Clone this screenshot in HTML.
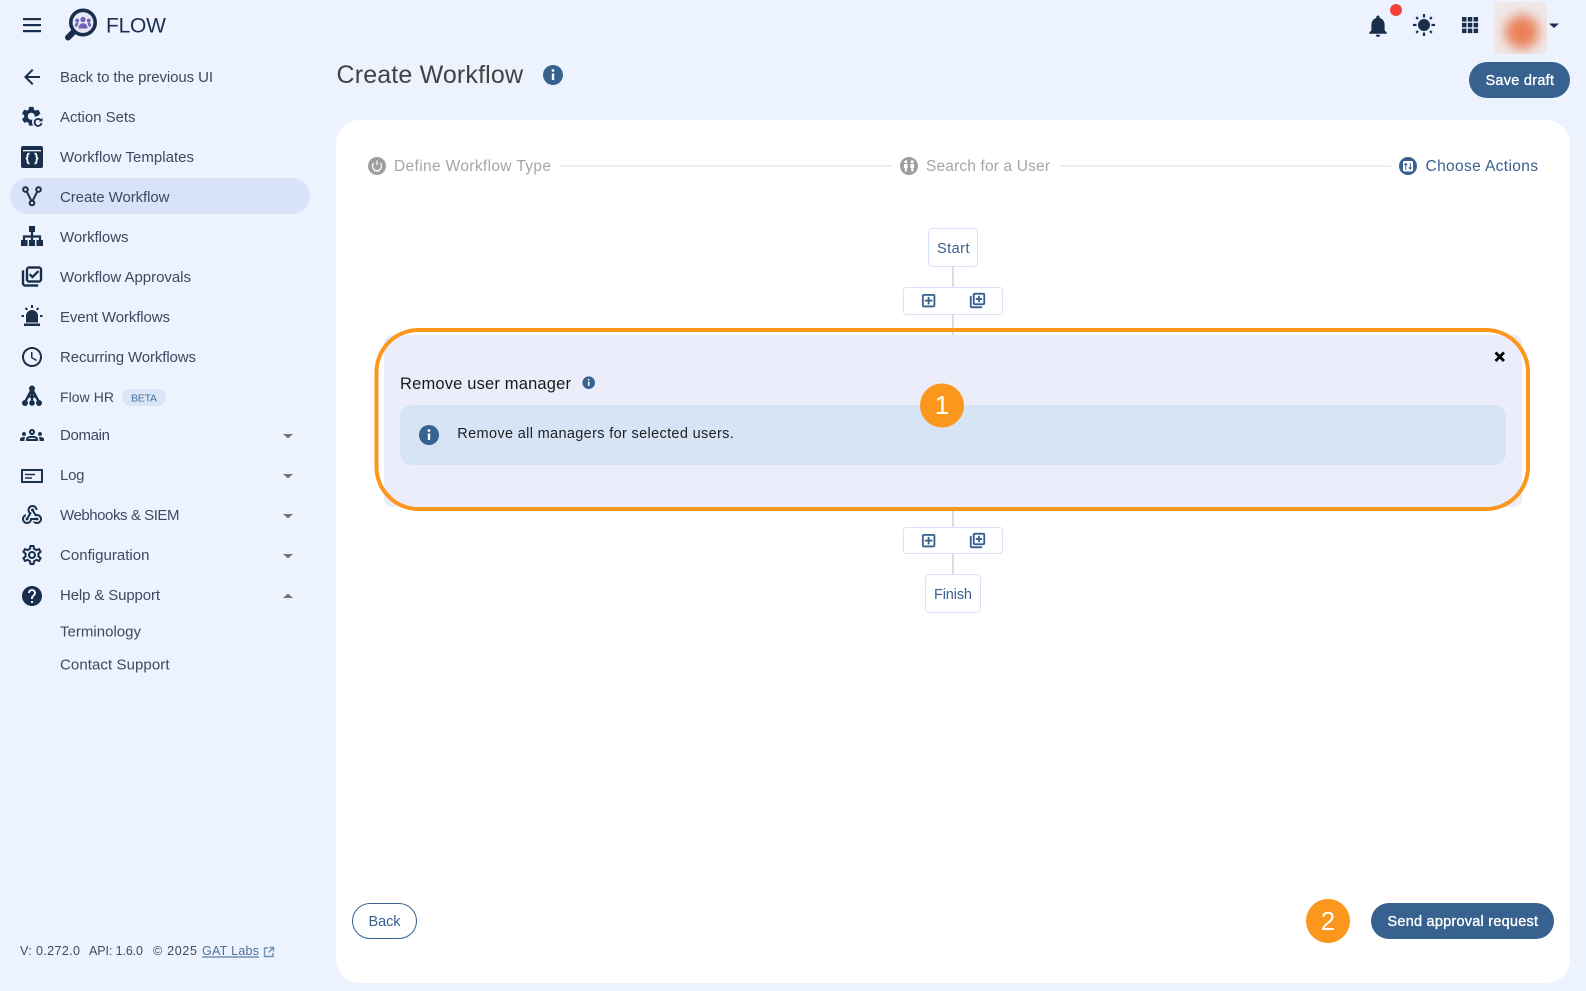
<!DOCTYPE html>
<html lang="en">
<head>
<meta charset="utf-8">
<title>Create Workflow</title>
<style>
html,body{margin:0;padding:0;background:#ecf3ff;width:1586px;height:991px;overflow:hidden}
svg{display:block}
text{font-family:"Liberation Sans",Arial,sans-serif}
.n{font-size:15px;fill:#3b4a5f}
.i{fill:#1a2f4b}
</style>
</head>
<body>
<svg xmlns="http://www.w3.org/2000/svg" width="1586" height="991" viewBox="0 0 1586 991">
<defs>
<filter id="bl" x="-100%" y="-100%" width="300%" height="300%"><feGaussianBlur stdDeviation="6"/></filter>
<clipPath id="av"><rect x="1494" y="2" width="53" height="52"/></clipPath>
</defs>
<rect width="1586" height="991" fill="#ecf3ff"/>

<!-- top bar -->
<g fill="#1a2f4b">
<rect x="23" y="18" width="18" height="2.200"/><rect x="23" y="24" width="18" height="2.200"/><rect x="23" y="30" width="18" height="2.200"/>
</g>
<path d="M74 31.500L68 37.500" stroke="#1a2f4b" stroke-width="6" stroke-linecap="round"/>
<circle cx="83" cy="22.500" r="12.200" fill="#e6e6f4" stroke="#1a2f4b" stroke-width="3.600"/>
<g fill="#6f63b3">
<circle cx="83" cy="19.500" r="2.600"/><path d="M78.500 28.500c0-3.400 1.900-5.200 4.500-5.200s4.500 1.800 4.500 5.200z"/>
<circle cx="77.200" cy="20.500" r="1.900"/><circle cx="88.800" cy="20.500" r="1.900"/>
<path d="M74.800 26.500c0-2.700 1-4 2.700-4l1 .5-1.200 3.500zM91.200 26.500c0-2.700-1-4-2.700-4l-1 .5 1.200 3.500z"/>
</g>
<text x="106" y="32.500" font-size="21" fill="#1a2f4b" textLength="60">FLOW</text>

<path transform="translate(1364.800 12.800) scale(1.100)" class="i" d="M12 22c1.100 0 2-.9 2-2h-4c0 1.100.9 2 2 2zm6-6v-5c0-3.070-1.630-5.640-4.500-6.320V4c0-.83-.67-1.500-1.500-1.500s-1.500.67-1.500 1.500v.68C7.640 5.360 6 7.920 6 11v5l-2 2v1h16v-1l-2-2z"/>
<circle cx="1396" cy="10" r="6" fill="#f4413a"/>
<circle cx="1424" cy="25" r="6" fill="#1a2f4b"/>
<g stroke="#1a2f4b" stroke-width="2.200">
<path d="M1424 14v3.500M1424 32.500v3.500M1413 25h3.500M1431.500 25h3.500M1416.200 17.200l1.800 1.800M1430 31l1.800 1.800M1416.200 32.800l1.800-1.800M1430 19l1.800-1.800"/>
</g>
<g fill="#1a2f4b">
<rect x="1462" y="17" width="4.500" height="4.500"/><rect x="1467.800" y="17" width="4.500" height="4.500"/><rect x="1473.600" y="17" width="4.500" height="4.500"/>
<rect x="1462" y="22.800" width="4.500" height="4.500"/><rect x="1467.800" y="22.800" width="4.500" height="4.500"/><rect x="1473.600" y="22.800" width="4.500" height="4.500"/>
<rect x="1462" y="28.600" width="4.500" height="4.500"/><rect x="1467.800" y="28.600" width="4.500" height="4.500"/><rect x="1473.600" y="28.600" width="4.500" height="4.500"/>
</g>
<g clip-path="url(#av)">
<rect x="1494" y="2" width="53" height="52" fill="#efe9ea"/>
<circle cx="1522" cy="32" r="17" fill="#e97f52" filter="url(#bl)"/>
</g>
<path d="M1549 23.500h10l-5 4.500z" fill="#1a2f4b"/>

<!-- sidebar -->
<rect x="10" y="178" width="300" height="36" rx="18" fill="#d8e3f9"/>
<path transform="translate(20 65)" class="i" d="M20 11H7.830l5.590-5.590L12 4l-8 8 8 8 1.410-1.410L7.830 13H20v-2z"/>
<text class="n" x="60" y="82" textLength="153">Back to the previous UI</text>
<path transform="translate(19.500 104.500) scale(.98)" class="i" d="M19.140 12.940c.04-.3.06-.61.06-.94 0-.32-.02-.64-.07-.94l2.030-1.580c.18-.14.23-.41.12-.61l-1.920-3.320c-.12-.22-.37-.29-.59-.22l-2.390.96c-.5-.38-1.030-.7-1.620-.94l-.36-2.540c-.04-.24-.24-.41-.48-.41h-3.840c-.24 0-.43.17-.47.41l-.36 2.540c-.59.24-1.130.57-1.620.94l-2.390-.96c-.22-.08-.47 0-.59.22L2.740 8.870c-.12.21-.08.47.12.61l2.030 1.580c-.05.3-.09.63-.09.94s.02.64.07.94l-2.030 1.580c-.18.14-.23.41-.12.61l1.920 3.320c.12.22.37.29.59.22l2.390-.96c.5.38 1.030.7 1.620.94l.36 2.540c.05.24.24.41.48.41h3.840c.24 0 .44-.17.47-.41l.36-2.540c.59-.24 1.130-.56 1.620-.94l2.390.96c.22.08.47 0 .59-.22l1.920-3.320c.12-.22.07-.47-.12-.61l-2.010-1.580zM12 15.600c-1.980 0-3.600-1.620-3.600-3.600s1.620-3.600 3.600-3.600 3.600 1.620 3.600 3.600-1.620 3.600-3.600 3.600z"/>
<circle cx="38" cy="122" r="6" fill="#ecf3ff"/>
<path d="M41 120.500a3.500 3.500 0 1 0 .5 2.500" fill="none" stroke="#1a2f4b" stroke-width="1.800"/>
<path d="M42.500 117.800v3.600h-3.600z" fill="#1a2f4b"/>
<text class="n" x="60" y="122" textLength="75.500">Action Sets</text>

<rect x="21" y="146" width="22" height="22" rx="2" fill="#1a2f4b"/>
<rect x="23" y="150" width="18" height="1.300" fill="#ecf3ff"/>
<path d="M29.500 153.500c-2 0-2 1.200-2 2.600s-.3 2.400-1.700 2.400c1.400 0 1.700 1 1.700 2.400s0 2.600 2 2.600M34.500 153.500c2 0 2 1.200 2 2.600s.3 2.400 1.700 2.400c-1.400 0-1.700 1-1.700 2.400s0 2.600-2 2.600" fill="none" stroke="#fff" stroke-width="1.800"/>
<text class="n" x="60" y="162" textLength="134">Workflow Templates</text>

<g fill="none" stroke="#1a2f4b" stroke-width="2">
<circle cx="25.500" cy="189.500" r="2.300"/><circle cx="38.500" cy="189.500" r="2.300"/><circle cx="32" cy="203" r="2.300"/>
<path d="M26.800 191.800l4.600 9M37.200 191.800l-4.600 9"/>
</g>
<text class="n" x="60" y="202" textLength="109.500">Create Workflow</text>

<g fill="#1a2f4b">
<rect x="29" y="226" width="6" height="6"/>
<rect x="21" y="240" width="6.500" height="6"/><rect x="29" y="240" width="6" height="6"/><rect x="36.500" y="240" width="6.500" height="6"/>
</g>
<path d="M32 232v8M24 240v-3.500h16v3.500" fill="none" stroke="#1a2f4b" stroke-width="2.200"/>
<text class="n" x="60" y="242" textLength="68.500">Workflows</text>

<path transform="translate(20 264.500)" class="i" stroke="#1a2f4b" stroke-width=".4" d="M20 4v12H8V4h12m0-2H8L6 4v12l2 2h12l2-2V4l-2-2zM12.470 14L9 10.500l1.400-1.410 2.070 2.080L17.600 6 19 7.410 12.470 14zM4 6H2v14l2 2h14v-2H4V6z"/>
<text class="n" x="60" y="282" textLength="131">Workflow Approvals</text>

<path d="M26 322.500v-6.500a6 6 0 0 1 12 0v6.500zM24 323.500h16v2.500H24z" fill="#1a2f4b"/>
<path d="M32 305v3M25.500 308l1.800 1.800M38.500 308l-1.800 1.800M21.500 316h2.500M40 316h2.500" stroke="#1a2f4b" stroke-width="2"/>
<text class="n" x="60" y="322" textLength="110">Event Workflows</text>

<path transform="translate(20 345)" class="i" d="M11.990 2C6.470 2 2 6.480 2 12s4.470 10 9.990 10C17.520 22 22 17.520 22 12S17.520 2 11.990 2zM12 20c-4.420 0-8-3.580-8-8s3.580-8 8-8 8 3.580 8 8-3.580 8-8 8zm.5-13H11v6l5.250 3.150.75-1.230-4.500-2.670z"/>
<text class="n" x="60" y="362" textLength="136">Recurring Workflows</text>

<g fill="#1a2f4b">
<circle cx="32" cy="388.500" r="3"/><circle cx="25" cy="403" r="3"/><circle cx="32" cy="403" r="2.800"/><circle cx="39" cy="403" r="3"/>
</g>
<path d="M32 390v12M31 391l-6 11M33 391l6 11M28 396.500h8" fill="none" stroke="#1a2f4b" stroke-width="2.400"/>
<text class="n" x="60" y="402" font-size="14" style="font-size:14px" textLength="54">Flow HR</text>
<rect x="122" y="389" width="44" height="17" rx="8.500" fill="#dbe5f8"/>
<text x="131" y="401.500" font-size="10.500" fill="#46709f" textLength="26">BETA</text>

<path transform="translate(20 423)" class="i" d="M4 13c1.100 0 2-.9 2-2s-.9-2-2-2-2 .9-2 2 .9 2 2 2zm1.130 1.100c-.37-.06-.74-.1-1.130-.1-.99 0-1.930.21-2.780.58C.48 14.900 0 15.620 0 16.430V18h4.500v-1.610c0-.83.23-1.610.63-2.290zM20 13c1.100 0 2-.9 2-2s-.9-2-2-2-2 .9-2 2 .9 2 2 2zm4 3.430c0-.81-.48-1.530-1.220-1.850-.85-.37-1.790-.58-2.780-.58-.39 0-.76.04-1.130.1.4.68.63 1.460.63 2.290V18H24v-1.570zm-7.760-2.780c-1.170-.52-2.610-.9-4.240-.9-1.630 0-3.070.39-4.240.9C6.680 14.130 6 15.210 6 16.390V18h12v-1.610c0-1.180-.68-2.260-1.760-2.740zM8.070 16c.09-.23.13-.39.91-.69.97-.38 1.990-.56 3.020-.56s2.050.18 3.020.56c.77.3.81.46.91.69H8.070zM12 8c.55 0 1 .45 1 1s-.45 1-1 1-1-.45-1-1 .45-1 1-1m0-2c-1.660 0-3 1.340-3 3s1.340 3 3 3 3-1.340 3-3-1.340-3-3-3z"/>
<text class="n" x="60" y="440" textLength="50">Domain</text>
<path d="M283 434h10l-5 4.500z" fill="#757575"/>

<rect x="22" y="470" width="20" height="12" fill="none" stroke="#1a2f4b" stroke-width="2"/>
<path d="M25 474.500h10M25 478h7" stroke="#1a2f4b" stroke-width="1.500"/>
<text class="n" x="60" y="480" textLength="24.500">Log</text>
<path d="M283 474h10l-5 4.500z" fill="#757575"/>

<path transform="translate(20 503)" class="i" d="M10 15h5.880c.27-.31.67-.5 1.120-.5.83 0 1.500.67 1.500 1.500s-.67 1.500-1.500 1.500c-.44 0-.84-.19-1.120-.5H11.900c-.46 2.280-2.480 4-4.900 4-2.760 0-5-2.240-5-5 0-2.420 1.720-4.440 4-4.900v2.070c-1.160.41-2 1.530-2 2.830 0 1.650 1.350 3 3 3s3-1.350 3-3v-1zm2.500-11c1.650 0 3 1.350 3 3h2c0-2.760-2.240-5-5-5s-5 2.240-5 5c0 1.430.6 2.710 1.550 3.620l-2.350 3.900c-.68.14-1.200.75-1.200 1.480 0 .83.67 1.500 1.500 1.500s1.500-.67 1.500-1.500c0-.16-.02-.31-.07-.45l3.380-5.630C10.490 9.610 9.500 8.420 9.500 7c0-1.650 1.350-3 3-3zm4.500 9c-.64 0-1.230.2-1.720.54l-3.050-5.070C11.530 8.350 11 7.740 11 7c0-.83.67-1.500 1.500-1.500S14 6.170 14 7c0 .15-.02.29-.06.43l2.190 3.650c.28-.05.57-.08.87-.08 2.760 0 5 2.240 5 5s-2.240 5-5 5c-1.850 0-3.470-1.010-4.330-2.500h2.670c.48.32 1.050.5 1.660.5 1.650 0 3-1.350 3-3s-1.350-3-3-3z"/>
<text class="n" x="60" y="520" textLength="119.500">Webhooks &amp; SIEM</text>
<path d="M283 514h10l-5 4.500z" fill="#757575"/>

<path transform="translate(20 543)" class="i" d="M19.430 12.980c.04-.32.07-.64.07-.98 0-.34-.03-.66-.07-.98l2.110-1.650c.19-.15.24-.42.12-.64l-2-3.460c-.09-.16-.26-.25-.44-.25-.06 0-.12.01-.17.03l-2.490 1c-.52-.4-1.080-.73-1.690-.98l-.38-2.650C14.460 2.180 14.250 2 14 2h-4c-.25 0-.46.18-.49.42l-.38 2.650c-.61.25-1.170.59-1.690.98l-2.490-1c-.06-.02-.12-.03-.18-.03-.17 0-.34.09-.43.25l-2 3.460c-.13.22-.07.49.12.64l2.110 1.650c-.04.32-.07.65-.07.98 0 .33.03.66.07.98l-2.110 1.650c-.19.15-.24.42-.12.64l2 3.460c.09.16.26.25.44.25.06 0 .12-.01.17-.03l2.490-1c.52.4 1.080.73 1.690.98l.38 2.650c.03.24.24.42.49.42h4c.25 0 .46-.18.49-.42l.38-2.650c.61-.25 1.170-.59 1.690-.98l2.490 1c.06.02.12.03.18.03.17 0 .34-.09.43-.25l2-3.460c.12-.22.07-.49-.12-.64l-2.110-1.650zm-1.980-1.710c.04.31.05.52.05.73 0 .21-.02.43-.05.73l-.14 1.130.89.7 1.080.84-.7 1.210-1.270-.51-1.040-.42-.9.68c-.43.32-.84.56-1.250.73l-1.060.43-.16 1.130-.2 1.350h-1.400l-.19-1.350-.16-1.130-1.060-.43c-.43-.18-.83-.41-1.230-.71l-.91-.7-1.060.43-1.270.51-.7-1.210 1.080-.84.89-.7-.14-1.130c-.03-.31-.05-.54-.05-.74s.02-.43.05-.73l.14-1.130-.89-.7-1.080-.84.7-1.210 1.270.51 1.040.42.9-.68c.43-.32.84-.56 1.250-.73l1.060-.43.16-1.130.2-1.350h1.390l.19 1.350.16 1.130 1.060.43c.43.18.83.41 1.230.71l.91.7 1.060-.43 1.270-.51.7 1.210-1.070.85-.89.7.14 1.130zM12 8c-2.210 0-4 1.790-4 4s1.790 4 4 4 4-1.790 4-4-1.790-4-4-4zm0 6c-1.100 0-2-.9-2-2s.9-2 2-2 2 .9 2 2-.9 2-2 2z"/>
<text class="n" x="60" y="560" textLength="89.500">Configuration</text>
<path d="M283 554h10l-5 4.500z" fill="#757575"/>

<path transform="translate(20 584)" class="i" d="M12 2C6.480 2 2 6.480 2 12s4.480 10 10 10 10-4.480 10-10S17.520 2 12 2zm1 17h-2v-2h2v2zm2.070-7.750l-.9.92C13.450 12.900 13 13.500 13 15h-2v-.5c0-1.100.45-2.100 1.170-2.830l1.240-1.260c.37-.36.59-.86.59-1.410 0-1.100-.9-2-2-2s-2 .9-2 2H8c0-2.210 1.790-4 4-4s4 1.790 4 4c0 .88-.36 1.680-.93 2.250z"/>
<text class="n" x="60" y="600" textLength="100">Help &amp; Support</text>
<path d="M283 598h10l-5-4.500z" fill="#757575"/>
<text class="n" x="60" y="636.500" textLength="81">Terminology</text>
<text class="n" x="60" y="669.500" textLength="109.500">Contact Support</text>

<!-- footer -->
<g font-size="12.500" fill="#3b4a5f">
<text x="20" y="955" textLength="60">V: 0.272.0</text>
<text x="89" y="955" textLength="54">API: 1.6.0</text>
<text x="153" y="955" textLength="44">© 2025</text>
</g>
<text x="202" y="955" font-size="12.500" fill="#4d7099" textLength="57">GAT Labs</text>
<rect x="202" y="956.500" width="57" height="1" fill="#37618e"/>
<path d="M268 948h-3.500v8.500h8.500V953M269.500 947.500h4v4M273.500 947.500l-5 5" fill="none" stroke="#6e8fb5" stroke-width="1.400"/>

<!-- header content -->
<text x="336.500" y="83" font-size="25" fill="#424242" textLength="186.500">Create Workflow</text>
<circle cx="553" cy="75" r="10" fill="#37618e"/>
<rect x="551.800" y="73.500" width="2.400" height="6.500" fill="#fff"/><circle cx="553" cy="70.500" r="1.400" fill="#fff"/>
<rect x="1469" y="62" width="101" height="36" rx="18" fill="#37618e"/>
<text x="1485.500" y="85" font-size="14.500" fill="#fff" stroke="#fff" stroke-width=".35" textLength="68.500">Save draft</text>

<!-- main card -->
<rect x="336" y="120" width="1234" height="863" rx="24" fill="#fff"/>

<!-- stepper -->
<circle cx="377" cy="166" r="9" fill="#9e9e9e"/>
<path d="M373.800 163a4.500 4.500 0 1 0 6.400 0M377 160.500v4.500" fill="none" stroke="#fff" stroke-width="1.200"/>
<path d="M374 171.500h6" stroke="#fff" stroke-width="1" stroke-dasharray="1 1"/>
<text x="394" y="171" font-size="15.500" fill="#a6a6a6" textLength="157">Define Workflow Type</text>
<rect x="559" y="165.500" width="333" height="1" fill="#dcdcdc"/>
<circle cx="909" cy="166" r="9" fill="#9e9e9e"/>
<g fill="#fff"><circle cx="905.800" cy="161.800" r="1.500"/><circle cx="912.200" cy="161.800" r="1.500"/><path d="M904 164h3.500l.2 4h-.9v3.500h-2v-3.500h-.9zM910.500 164h3.500l.2 4h-.9v3.500h-2v-3.500h-.9z"/></g>
<text x="926" y="171" font-size="15.500" fill="#a6a6a6" textLength="124">Search for a User</text>
<rect x="1059" y="165.500" width="332" height="1" fill="#dcdcdc"/>
<circle cx="1408" cy="166" r="9" fill="#37618e"/>
<rect x="1403" y="161" width="10" height="10.500" rx="1.500" fill="#fff"/>
<path d="M1405.800 169.800v-6M1404.400 165l1.400-1.600 1.400 1.600M1410.200 162.800v6M1408.800 167.400l1.400 1.600 1.400-1.600" fill="none" stroke="#37618e" stroke-width="1"/>
<text x="1425.500" y="171" font-size="15.500" fill="#37618e" textLength="112.500">Choose Actions</text>

<!-- flow connectors -->
<g fill="#dddddd">
<rect x="952" y="267" width="2" height="20"/>
<rect x="952" y="315" width="2" height="20"/>
<rect x="952" y="507" width="2" height="20"/>
<rect x="952" y="553" width="2" height="21"/>
</g>

<rect x="928.500" y="228.500" width="49" height="38" rx="4" fill="#fff" stroke="#d8e3f9"/>
<text x="937" y="253" font-size="14.500" fill="#37618e" textLength="32.500">Start</text>

<rect x="903.500" y="287.500" width="99" height="27" rx="3" fill="#fff" stroke="#d8e3f9"/>
<path transform="translate(920 292) scale(.72)" fill="#37618e" stroke="#37618e" stroke-width=".5" d="M19 3H5c-1.100 0-2 .9-2 2v14c0 1.100.9 2 2 2h14c1.100 0 2-.9 2-2V5c0-1.100-.9-2-2-2zm0 16H5V5h14v14zm-8-2h2v-4h4v-2h-4V7h-2v4H7v2h4z"/>
<path transform="translate(968.500 291.500) scale(.75)" fill="#37618e" stroke="#37618e" stroke-width=".5" d="M4 6H2v14c0 1.100.9 2 2 2h14v-2H4V6zm16-4H8c-1.100 0-2 .9-2 2v12c0 1.100.9 2 2 2h12c1.100 0 2-.9 2-2V4c0-1.100-.9-2-2-2zm0 14H8V4h12v12zm-7-2h2v-3h3V9h-3V6h-2v3h-3v2h3z"/>

<!-- action card -->
<rect x="384" y="335" width="1138" height="172" rx="8" fill="#ebeefa"/>
<rect x="376.500" y="330" width="1151.500" height="179" rx="42" fill="none" stroke="#fc971e" stroke-width="4"/>
<text x="400" y="389" font-size="16.500" fill="#1a1a1a" textLength="171">Remove user manager</text>
<circle cx="588.700" cy="382.700" r="6.300" fill="#37618e"/>
<rect x="587.900" y="381.800" width="1.600" height="4" fill="#fff"/><circle cx="588.700" cy="379.800" r=".9" fill="#fff"/>
<rect x="400" y="405" width="1106" height="60" rx="12" fill="#d6e4f6"/>
<circle cx="429" cy="435" r="10" fill="#37618e"/>
<rect x="427.800" y="433.500" width="2.400" height="6.500" fill="#fff"/><circle cx="429" cy="430.500" r="1.400" fill="#fff"/>
<text x="457.300" y="438" font-size="14.500" fill="#1f1f1f" textLength="276.500">Remove all managers for selected users.</text>
<path d="M1495.500 352.500l8.500 8.500M1504 352.500l-8.500 8.500" stroke="#000" stroke-width="2.800"/>

<circle cx="942" cy="405.500" r="22" fill="#fc971e"/>
<text x="942" y="414" font-size="26" fill="#fff" text-anchor="middle">1</text>

<rect x="903.500" y="527.500" width="99" height="26" rx="3" fill="#fff" stroke="#d8e3f9"/>
<path transform="translate(920 532) scale(.72)" fill="#37618e" stroke="#37618e" stroke-width=".5" d="M19 3H5c-1.100 0-2 .9-2 2v14c0 1.100.9 2 2 2h14c1.100 0 2-.9 2-2V5c0-1.100-.9-2-2-2zm0 16H5V5h14v14zm-8-2h2v-4h4v-2h-4V7h-2v4H7v2h4z"/>
<path transform="translate(968.500 531.500) scale(.75)" fill="#37618e" stroke="#37618e" stroke-width=".5" d="M4 6H2v14c0 1.100.9 2 2 2h14v-2H4V6zm16-4H8c-1.100 0-2 .9-2 2v12c0 1.100.9 2 2 2h12c1.100 0 2-.9 2-2V4c0-1.100-.9-2-2-2zm0 14H8V4h12v12zm-7-2h2v-3h3V9h-3V6h-2v3h-3v2h3z"/>

<rect x="925.500" y="574.500" width="55" height="38" rx="4" fill="#fff" stroke="#d8e3f9"/>
<text x="934" y="599" font-size="14.500" fill="#37618e" textLength="38">Finish</text>

<!-- bottom actions -->
<rect x="352.500" y="903.500" width="64" height="35" rx="17.500" fill="#fff" stroke="#37618e"/>
<text x="368.500" y="926" font-size="14.500" fill="#37618e" textLength="32">Back</text>
<circle cx="1328" cy="921" r="22" fill="#fc971e"/>
<text x="1328" y="930" font-size="26" fill="#fff" text-anchor="middle">2</text>
<rect x="1371" y="903" width="183" height="36" rx="18" fill="#37618e"/>
<text x="1387.500" y="926" font-size="14.500" fill="#fff" stroke="#fff" stroke-width=".35" textLength="150.500">Send approval request</text>
</svg>
</body>
</html>
